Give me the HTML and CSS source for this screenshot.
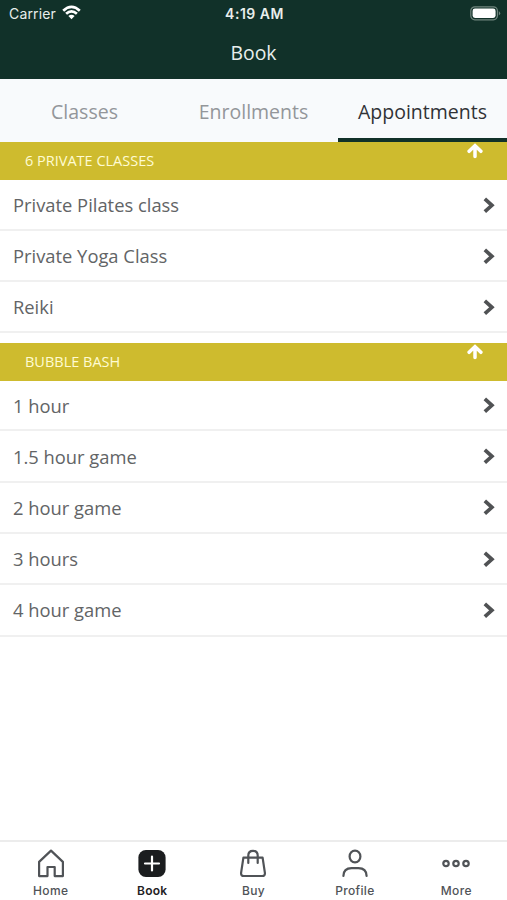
FILE: index.html
```
<!DOCTYPE html>
<html lang="en">
<head>
<meta charset="utf-8">
<title>Book</title>
<link rel="stylesheet" href="styles.css">
</head>
<body>
<svg class="defs" width="0" height="0" aria-hidden="true">
  <symbol id="chevron" viewBox="0 0 12 16"><path d="M3.2 3.2 8.9 8.3 3.2 13.4" fill="none" stroke="currentColor" stroke-width="3.7" stroke-linecap="square"/></symbol>
  <symbol id="arrow" viewBox="0 0 16 16"><path d="M2.1 8.3 8 2.6l5.9 5.7M8 4v9.6" fill="none" stroke="currentColor" stroke-width="3.5" stroke-linecap="round"/></symbol>
</svg>
<div class="app">
  <header class="header">
    <div class="status">
      <div class="carrier"><span>Carrier</span>
        <svg class="wifi" width="19" height="15" viewBox="0 0 19 15"><g fill="none" stroke="currentColor" stroke-width="2.7"><path d="M1.2 5.7Q9.5-2 17.8 5.7"/><path d="M4.1 8.8Q9.5 3.8 14.9 8.8"/></g><path d="M6.4 11.1Q9.5 8.5 12.6 11.1L9.5 14.2Z" fill="currentColor"/></svg>
      </div>
      <div class="time">4:19 AM</div>
      <svg class="battery" width="31" height="15" viewBox="0 0 31 15"><rect x=".8" y=".8" width="26.6" height="13" rx="4" fill="none" stroke="#70857e" stroke-width="1.2"/><rect x="2.6" y="2.6" width="23" height="9.4" rx="2.4" fill="#fff"/><path d="M28.8 5q2.8 2.3 0 4.6Z" fill="#70857e"/></svg>
    </div>
    <h1 class="title">Book</h1>
  </header>
  <nav class="tabs">
    <div class="tab"><span>Classes</span></div>
    <div class="tab"><span>Enrollments</span></div>
    <div class="tab active"><span>Appointments</span></div>
  </nav>
  <main class="content">
    <section class="group">
      <h2 class="band"><span>6 PRIVATE CLASSES</span><svg class="up"><use href="#arrow"/></svg></h2>
      <div class="row"><span>Private Pilates class</span><svg class="go"><use href="#chevron"/></svg></div>
      <div class="row"><span>Private Yoga Class</span><svg class="go"><use href="#chevron"/></svg></div>
      <div class="row"><span>Reiki</span><svg class="go"><use href="#chevron"/></svg></div>
    </section>
    <section class="group">
      <h2 class="band"><span>BUBBLE BASH</span><svg class="up"><use href="#arrow"/></svg></h2>
      <div class="row"><span>1 hour</span><svg class="go"><use href="#chevron"/></svg></div>
      <div class="row"><span>1.5 hour game</span><svg class="go"><use href="#chevron"/></svg></div>
      <div class="row"><span>2 hour game</span><svg class="go"><use href="#chevron"/></svg></div>
      <div class="row"><span>3 hours</span><svg class="go"><use href="#chevron"/></svg></div>
      <div class="row"><span>4 hour game</span><svg class="go"><use href="#chevron"/></svg></div>
    </section>
  </main>
  <footer class="bar">
    <div class="item"><svg viewBox="0 0 30 30"><path d="M3.1 12.9 15 1.6l11.9 11.3v14.2H18.7V18h-7.2v9.1H3.1Z" fill="none" stroke="currentColor" stroke-width="2.2" stroke-linejoin="round"/></svg><span>Home</span></div>
    <div class="item active"><svg viewBox="0 0 30 30"><rect x="1.4" y="1" width="27.2" height="27" rx="7.5" fill="#1b1d1f"/><path d="M15 7.5v14M8 14.5h14" stroke="#fff" stroke-width="2.2" stroke-linecap="round"/></svg><span>Book</span></div>
    <div class="item"><svg viewBox="0 0 30 30"><path d="M5.4 8.7h19.2l2.3 15.1q.3 3.2-2.7 3.2H5.8q-3 0-2.7-3.2ZM10.3 14V6.6q0-4.8 4.7-4.8t4.7 4.8V14" fill="none" stroke="currentColor" stroke-width="2.2" stroke-linejoin="round" stroke-linecap="round"/></svg><span>Buy</span></div>
    <div class="item"><svg viewBox="0 0 30 30"><g fill="none" stroke="currentColor" stroke-width="2.2" stroke-linecap="round"><ellipse cx="15" cy="7.5" rx="5.4" ry="5.9"/><path d="M3.4 27q.2-7.8 8.2-7.8h6.8q8 0 8.2 7.8"/></g></svg><span>Profile</span></div>
    <div class="item"><svg viewBox="0 0 30 30"><g fill="none" stroke="currentColor" stroke-width="2.2"><circle cx="5" cy="14.5" r="2.7"/><circle cx="15" cy="14.5" r="2.7"/><circle cx="25" cy="14.5" r="2.7"/></g></svg><span>More</span></div>
  </footer>
</div>
</body>
</html>
```
FILE: styles.css
```
* { box-sizing: border-box; }
body { margin: 0; background: #fff; font-family: "Open Sans", "Noto Sans", sans-serif; }
.defs { display: block; height: 0; }
.app { width: 507px; height: 900px; display: flex; flex-direction: column; overflow: hidden; }
.header { flex: none; height: 79.3px; background: #113129; color: #e8eeec; }
.status { height: 27px; display: grid; grid-template-columns: 1fr auto 1fr; align-items: center; padding: 0 6px 0 9px; font-family: Inter, sans-serif; font-size: 14px; }
.carrier { display: flex; align-items: center; gap: 6px; letter-spacing: .15px; }
.wifi { margin-top: -2px; color: #fff; }
.time { font-weight: 600; letter-spacing: .5px; margin-right: 1px; }
.battery { justify-self: end; }
.title { margin: 0; font-size: 19.4px; font-weight: 400; line-height: 26px; padding-top: 13px; text-align: center; }
.tabs { flex: none; height: 63.2px; display: grid; grid-template-columns: repeat(3, 1fr); background: #f8fafc; }
.tab { display: flex; justify-content: center; align-items: center; padding-top: 2px; font-size: 19.5px; color: #93969a; white-space: nowrap; }
.tab.active { color: #303236; padding-top: 5px; border-bottom: 4px solid #113129; }
.content { flex: 1; }
.group { margin-bottom: 9.5px; }
.band { margin: 0; height: 38px; background: #cebb2e; color: #fffbd2; display: flex; justify-content: space-between; padding: 0 24px 0 25px; font-size: 14.5px; font-weight: 400; line-height: 37px; }
.up { width: 16px; height: 16px; color: #fff; margin-top: 1px; }
.row { height: 51.3px; display: flex; justify-content: space-between; align-items: center; padding: 0 12px 0 13px; font-size: 18.35px; color: #626466; border-bottom: 2px solid #f0f0f0; }
.band + .row { height: 50.4px; }
.go { width: 12px; height: 16px; color: #505254; }
.bar { flex: none; height: 60.5px; display: grid; grid-template-columns: repeat(5, 1fr); border-top: 2px solid #ececec; font-family: Inter, sans-serif; }
.item { display: flex; flex-direction: column; align-items: center; padding-top: 7.5px; color: #505357; font-size: 12px; font-weight: 500; line-height: 16px; letter-spacing: .35px; }
.item svg { width: 30px; height: 30px; margin-bottom: 4px; }
.item.active { color: #1f2124; font-weight: 600; letter-spacing: .2px; }
```
